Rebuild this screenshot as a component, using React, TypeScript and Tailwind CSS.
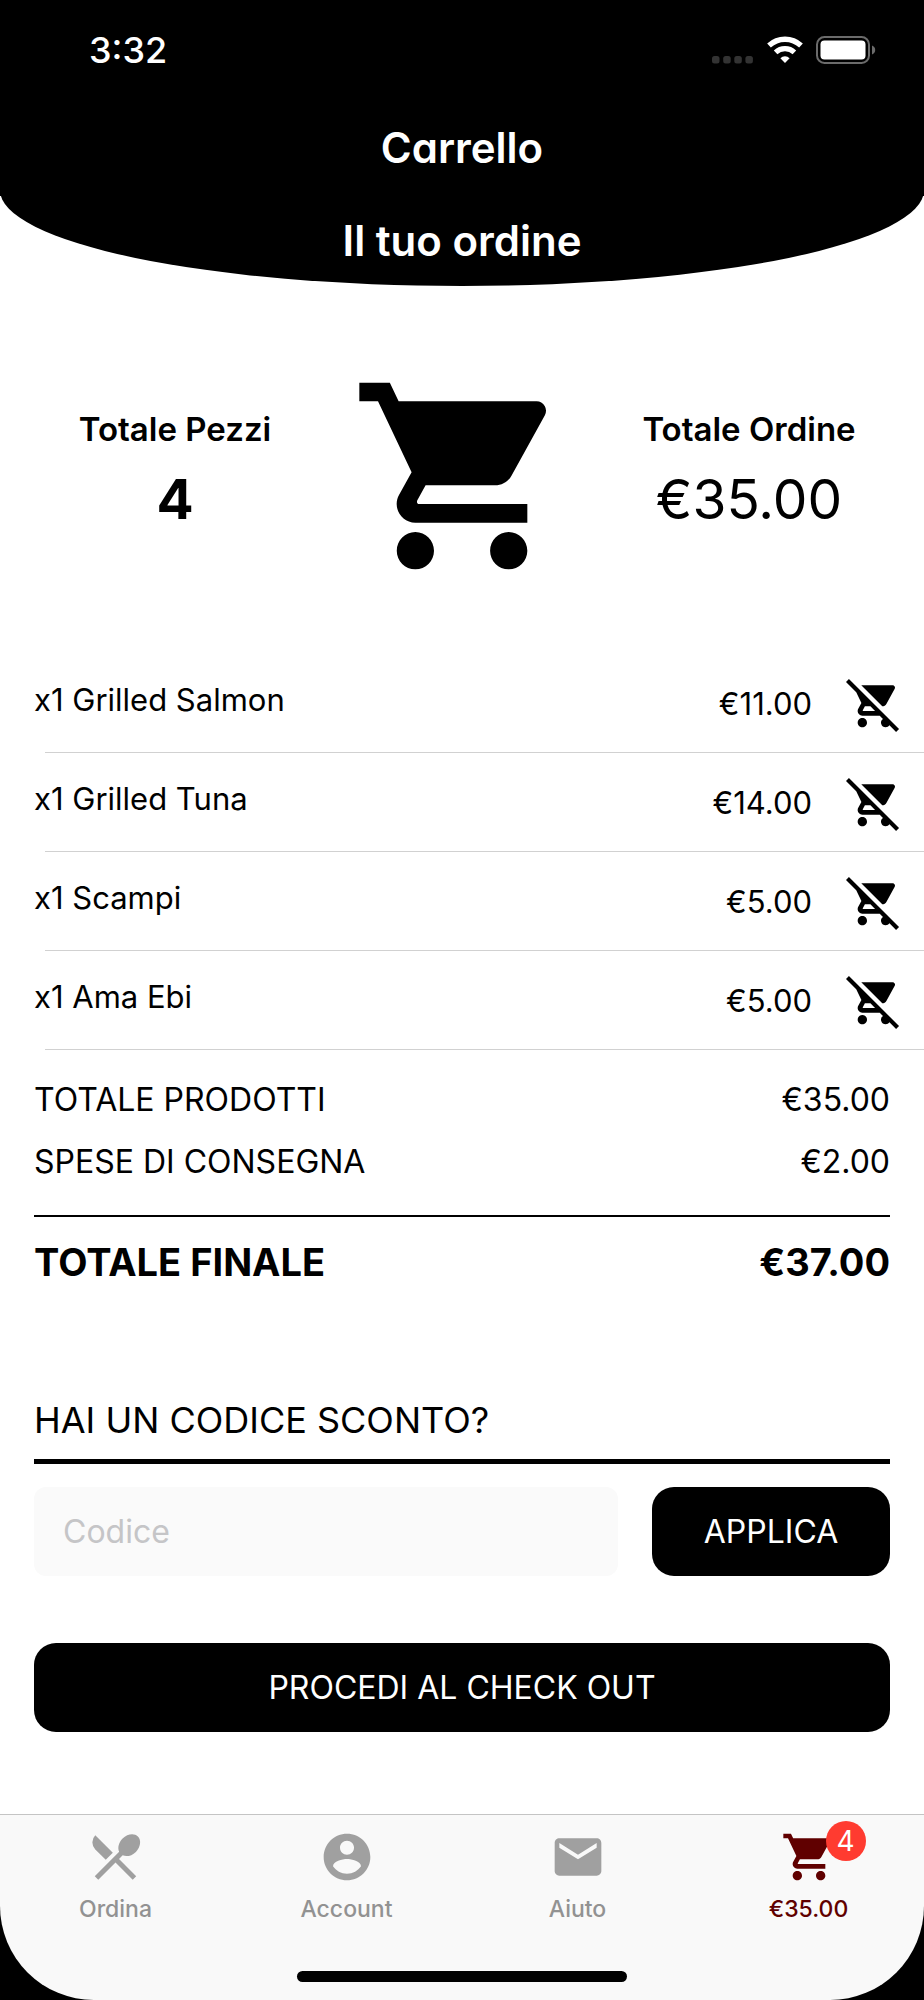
import React from 'react';
import { MdEmail, MdRemoveShoppingCart, MdShoppingCart } from 'react-icons/md';

interface CartItem {
  id: number;
  name: string;
  quantity: number;
  price: number;
}

const initialItems: CartItem[] = [
  { id: 1, name: 'Grilled Salmon', quantity: 1, price: 11 },
  { id: 2, name: 'Grilled Tuna', quantity: 1, price: 14 },
  { id: 3, name: 'Scampi', quantity: 1, price: 5 },
  { id: 4, name: 'Ama Ebi', quantity: 1, price: 5 },
];

const SHIPPING = 2;

const formatPrice = (value: number) => `€${value.toFixed(2)}`;

function StatusBar() {
  return (
    <div className="flex h-[100px] items-center justify-between pl-[89px] pr-12">
      <span className="text-[36px] leading-10 font-medium">3:32</span>
      <div className="flex items-center gap-[13px]">
        <svg width="42" height="28" viewBox="0 0 42 28" fill="#333333" aria-hidden="true">
          <rect x="0" y="20" width="7.5" height="7.5" rx="2.5" />
          <rect x="11.2" y="20" width="7.5" height="7.5" rx="2.5" />
          <rect x="22.3" y="20" width="7.5" height="7.5" rx="2.5" />
          <rect x="33.4" y="20" width="7.5" height="7.5" rx="2.5" />
        </svg>
        <svg width="36" height="28" viewBox="0 0 36 28" fill="none" stroke="currentColor" aria-hidden="true">
          <path d="M2 9.6a23.5 23.5 0 0 1 32 0" strokeWidth="5.4" />
          <path d="M8.6 16.4a13.8 13.8 0 0 1 18.8 0" strokeWidth="5.2" />
          <path d="M18 27l-4.6-4.8a6.6 6.6 0 0 1 9.2 0z" fill="currentColor" stroke="none" />
        </svg>
        <svg width="60" height="28" viewBox="0 0 60 28" fill="none" aria-hidden="true">
          <rect x="1" y="1" width="52" height="26" rx="7.5" stroke="#6b6b6b" strokeWidth="2" />
          <rect x="4.5" y="4.5" width="45" height="19" rx="4" fill="white" />
          <path d="M56 9.5c2 .8 3.2 2.5 3.2 4.5s-1.2 3.7-3.2 4.5z" fill="#6b6b6b" />
        </svg>
      </div>
    </div>
  );
}

function Header() {
  return (
    <header className="rounded-b-[50%_96px] bg-black text-center text-white">
      <div className="bg-black">
        <StatusBar />
        <h1 className="flex h-24 items-center justify-center text-[42px] leading-none font-semibold [font-feature-settings:'cv11']">
          Carrello
        </h1>
      </div>
      <h2 className="flex h-[90px] items-center justify-center text-[42px] leading-none font-semibold [font-feature-settings:'cv11']">
        Il tuo ordine
      </h2>
    </header>
  );
}

function Summary({ pieces, total }: { pieces: number; total: number }) {
  return (
    <section className="flex items-center pt-[78px] pb-[66px] text-center">
      <div className="flex flex-1 flex-col gap-5 pb-[14px]">
        <p className="text-[33px] leading-10 font-semibold">Totale Pezzi</p>
        <p className="text-[55px] leading-[60px] font-bold">{pieces}</p>
      </div>
      <MdShoppingCart className="size-56 shrink-0" />
      <div className="flex flex-1 flex-col gap-5 pb-[14px]">
        <p className="text-[33px] leading-10 font-semibold">Totale Ordine</p>
        <p className="text-[55px] leading-[60px]">{formatPrice(total)}</p>
      </div>
    </section>
  );
}

function CartRow({ item, onRemove }: { item: CartItem; onRemove: () => void }) {
  return (
    <li>
      <div className="flex h-[98px] items-center pt-0.5 pr-[22px] pl-[34px]">
        <span className="flex-1 pb-2 text-[31px] leading-10">
          x{item.quantity} {item.name}
        </span>
        <span className="text-[31px] leading-10">{formatPrice(item.price)}</span>
        <button type="button" aria-label={`Rimuovi ${item.name}`} onClick={onRemove} className="ml-[34px]">
          <MdRemoveShoppingCart className="size-14" />
        </button>
      </div>
      <div className="ml-[45px] h-px bg-[#d1d1d1]" />
    </li>
  );
}

function Totals({ products }: { products: number }) {
  return (
    <dl className="mx-[34px] pt-[19px]">
      <div className="flex h-[62px] items-center justify-between text-[32px]">
        <dt>TOTALE PRODOTTI</dt>
        <dd>{formatPrice(products)}</dd>
      </div>
      <div className="flex h-[62px] items-center justify-between text-[32px]">
        <dt>SPESE DI CONSEGNA</dt>
        <dd>{formatPrice(SHIPPING)}</dd>
      </div>
      <div className="mt-[22px] flex justify-between border-t-2 border-black pt-[21px] text-[38px] leading-[48px] font-bold">
        <dt>TOTALE FINALE</dt>
        <dd>{formatPrice(products + SHIPPING)}</dd>
      </div>
    </dl>
  );
}

function DiscountForm() {
  const [code, setCode] = React.useState('');

  return (
    <form className="mx-[34px] mt-[110px]" onSubmit={(e) => e.preventDefault()}>
      <label htmlFor="code" className="block border-b-[5px] border-black pb-[15px] text-[36px] leading-[48px]">
        HAI UN CODICE SCONTO?
      </label>
      <div className="mt-[23px] flex gap-[34px]">
        <input
          id="code"
          type="text"
          value={code}
          onChange={(e) => setCode(e.target.value)}
          placeholder="Codice"
          className="h-[89px] min-w-0 flex-1 rounded-xl bg-[#fafafa] px-[29px] text-[32px] outline-none placeholder:text-[#c5c5c7]"
        />
        <button type="submit" className="h-[89px] w-[238px] rounded-[22px] bg-black text-[32px] text-white">
          APPLICA
        </button>
      </div>
    </form>
  );
}

function CutleryIcon() {
  return (
    <svg viewBox="1 1 22.4 22.4" fill="currentColor" className="size-14" aria-hidden="true">
      <path d="M8.1 13.34l2.83-2.83L3.91 3.5a4.008 4.008 0 0 0 0 5.66l4.19 4.18zm6.78-1.81c1.53.71 3.68.21 5.27-1.38 1.91-1.91 2.28-4.65.81-6.12-1.46-1.46-4.2-1.1-6.12.81-1.59 1.59-2.09 3.74-1.38 5.27L3.7 19.87l1.41 1.41L12 14.41l6.88 6.88 1.41-1.41L13.41 13l1.47-1.47z" />
    </svg>
  );
}

function AccountIcon() {
  return (
    <svg viewBox="0 0 24 24" fill="currentColor" className="size-14" aria-hidden="true">
      <path d="M12 2C6.48 2 2 6.48 2 12s4.48 10 10 10 10-4.48 10-10S17.52 2 12 2zm0 3c1.66 0 3 1.34 3 3s-1.34 3-3 3-3-1.34-3-3 1.34-3 3-3zm0 14.2c-2.5 0-4.71-1.28-6-3.22.03-1.99 4-3.08 6-3.08 1.99 0 5.97 1.09 6 3.08-1.29 1.94-3.5 3.22-6 3.22z" />
    </svg>
  );
}

interface TabProps {
  label: string;
  href: string;
  icon: React.ReactNode;
  active?: boolean;
  badge?: number;
}

function Tab({ label, href, icon, active, badge }: TabProps) {
  return (
    <a
      href={href}
      className={`flex flex-1 flex-col items-center gap-2 pt-[14px] ${active ? 'text-[#600000]' : 'text-[#929292]'}`}
    >
      <span className={`relative ${active ? '' : 'text-[#a0a0a0]'}`}>
        {icon}
        {badge !== undefined && (
          <span className="absolute -top-2 left-[45px] flex size-10 items-center justify-center rounded-full bg-[#ff3b30] text-[28px] leading-none text-white">
            {badge}
          </span>
        )}
      </span>
      <span className="text-[23px] leading-8 font-medium">{label}</span>
    </a>
  );
}

function TabBar({ pieces, total }: { pieces: number; total: number }) {
  return (
    <div className="mt-auto bg-black">
      <nav className="rounded-b-[94px] bg-[#f9f9f9]">
        <div className="flex h-[157px] border-t border-[#c4c4c4]">
          <Tab label="Ordina" href="#ordina" icon={<CutleryIcon />} />
          <Tab label="Account" href="#account" icon={<AccountIcon />} />
          <Tab label="Aiuto" href="#aiuto" icon={<MdEmail className="size-14" />} />
          <Tab
            label={formatPrice(total)}
            href="#carrello"
            icon={<MdShoppingCart className="size-14" />}
            badge={pieces}
            active
          />
        </div>
        <div className="flex h-[29px] justify-center">
          <div className="h-[11px] w-[330px] rounded-full bg-black" />
        </div>
      </nav>
    </div>
  );
}

export default function App() {
  const [items, setItems] = React.useState(initialItems);

  const total = items.reduce((sum, item) => sum + item.price * item.quantity, 0);
  const pieces = items.reduce((sum, item) => sum + item.quantity, 0);

  return (
    <div className="flex min-h-screen flex-col bg-white font-['Inter',sans-serif] text-black">
      <Header />
      <main className="pb-20">
        <Summary pieces={pieces} total={total} />
        <ul>
          {items.map((item) => (
            <CartRow
              key={item.id}
              item={item}
              onRemove={() => setItems(items.filter((other) => other.id !== item.id))}
            />
          ))}
        </ul>
        <Totals products={total} />
        <DiscountForm />
        <div className="mx-[34px] mt-[67px]">
          <button type="button" className="h-[89px] w-full rounded-[22px] bg-black text-[32px] text-white">
            PROCEDI AL CHECK OUT
          </button>
        </div>
      </main>
      <TabBar pieces={pieces} total={total} />
    </div>
  );
}
